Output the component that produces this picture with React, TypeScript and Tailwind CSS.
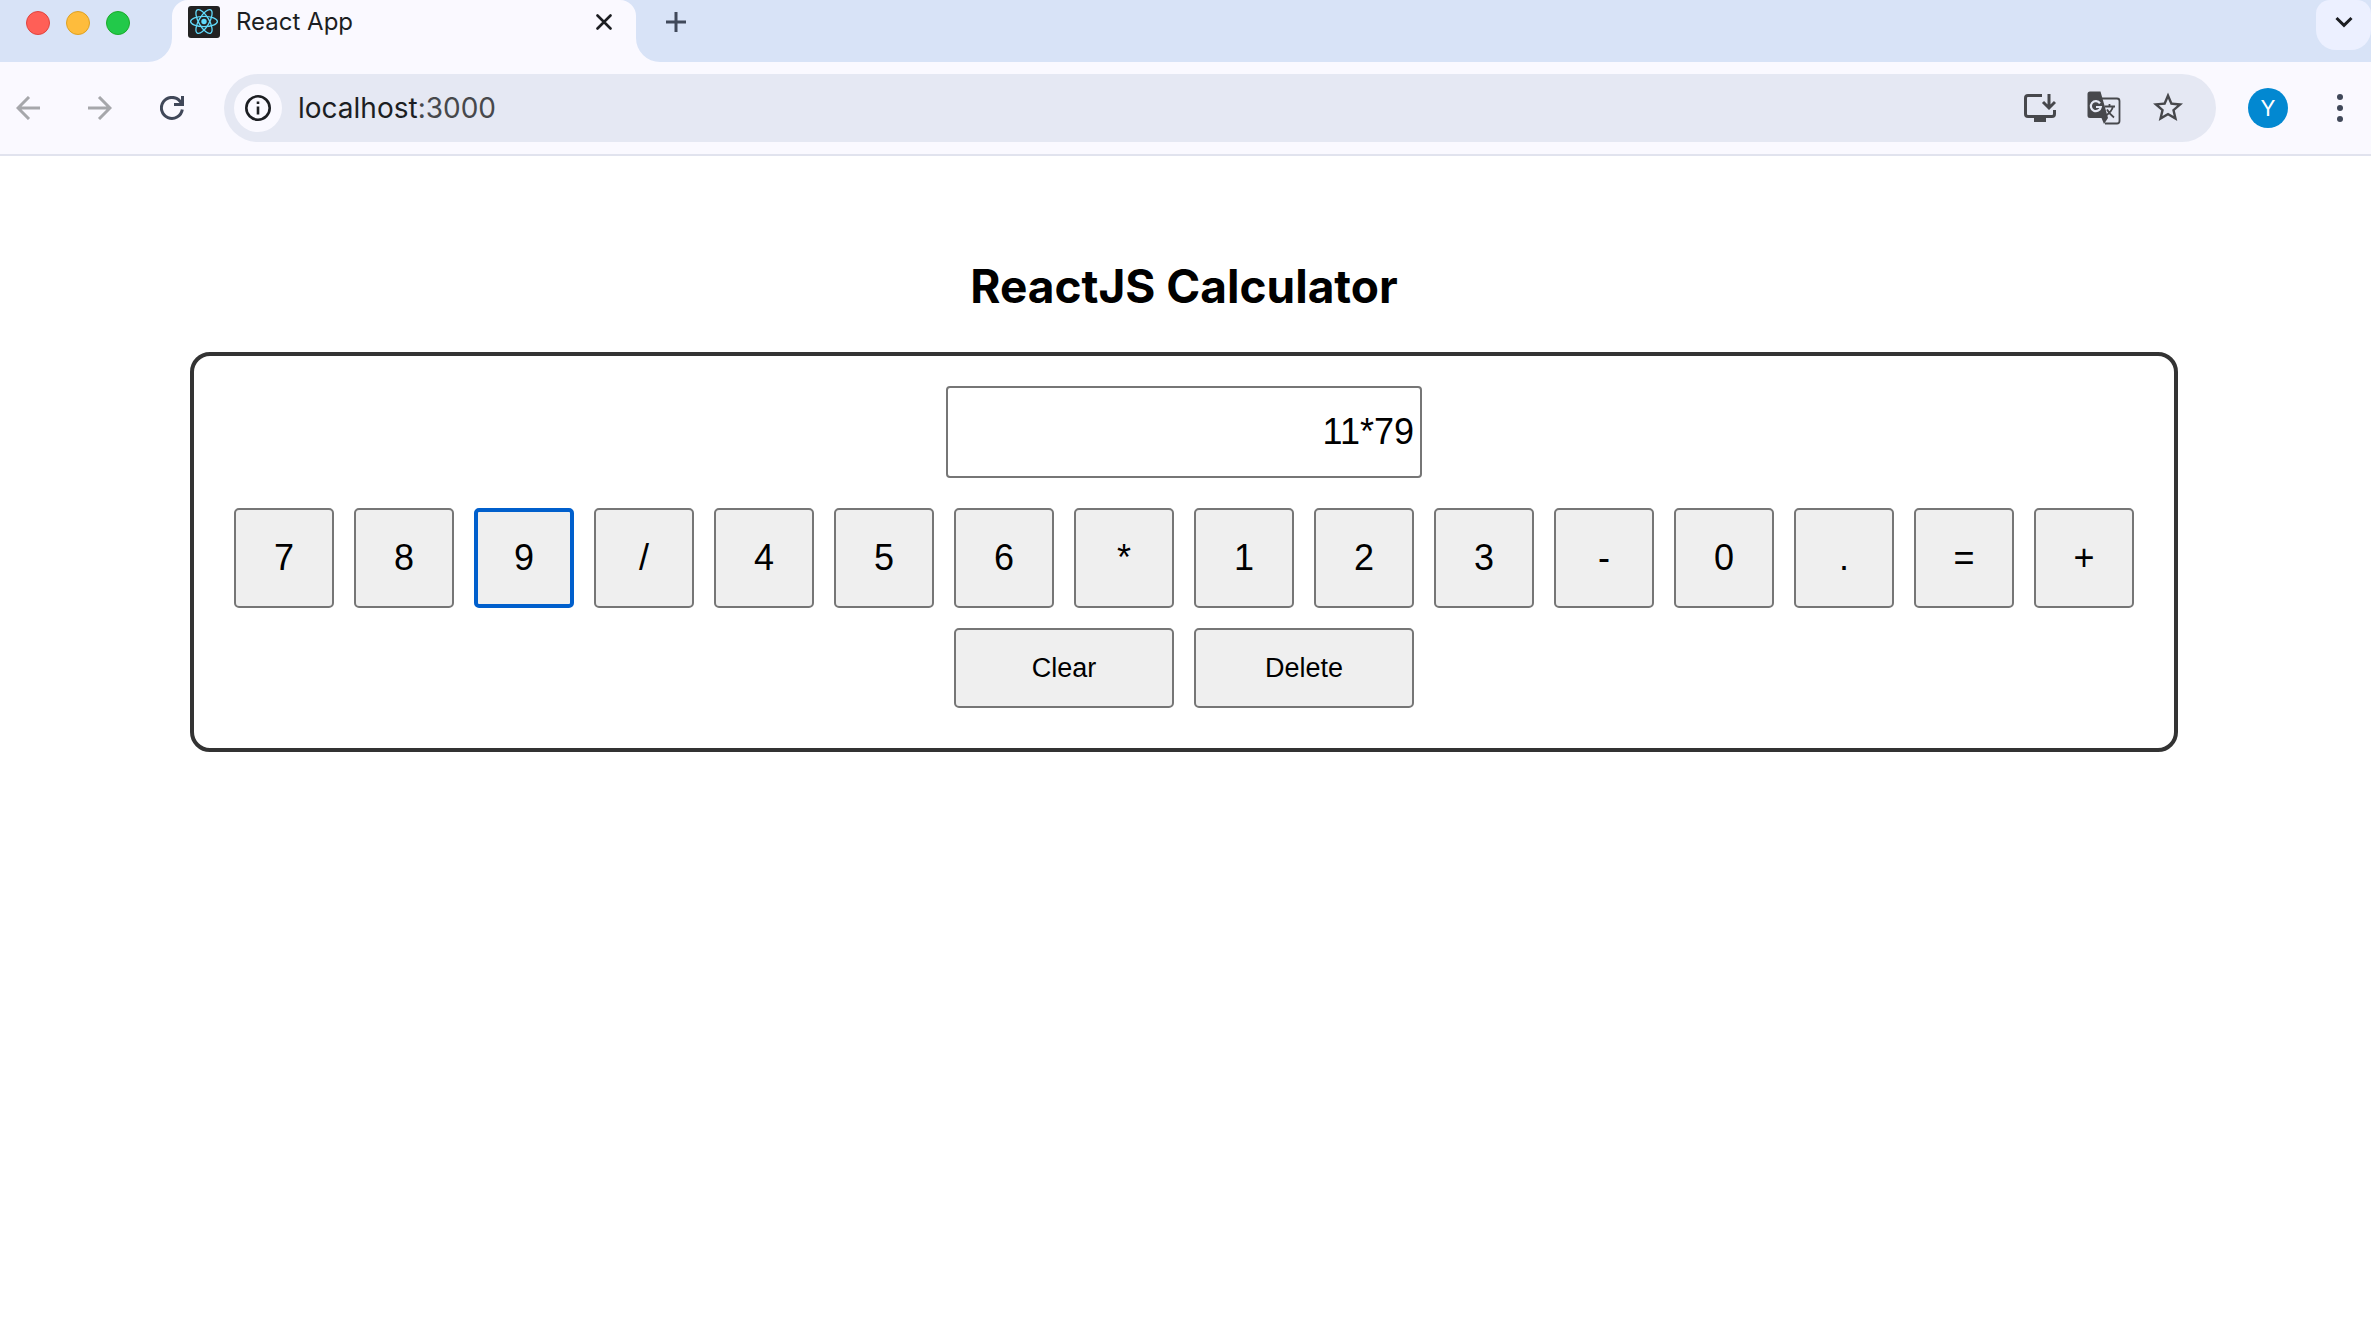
import { useState } from "react";

const KEYS = ["7", "8", "9", "/", "4", "5", "6", "*", "1", "2", "3", "-", "0", ".", "=", "+"];

function ReactIcon() {
  return (
    <svg viewBox="0 0 32 32" className="size-8 shrink-0" aria-hidden="true">
      <rect width="32" height="32" rx="3" fill="#222" />
      <g fill="none" stroke="#61dafb" strokeWidth="1.3">
        <ellipse cx="16" cy="15.5" rx="13.4" ry="5.2" />
        <ellipse cx="16" cy="15.5" rx="13.4" ry="5.2" transform="rotate(60 16 15.5)" />
        <ellipse cx="16" cy="15.5" rx="13.4" ry="5.2" transform="rotate(120 16 15.5)" />
      </g>
      <circle cx="16" cy="15.5" r="2.7" fill="#61dafb" />
    </svg>
  );
}

function TabStrip() {
  return (
    <div className="flex h-[62px] items-start bg-[#d8e3f7]">
      <div className="flex h-[46px] w-[172px] shrink-0 items-center gap-4 pl-[26px]">
        <span className="size-6 rounded-full border border-[#e0443e] bg-[#ff5f57]" />
        <span className="size-6 rounded-full border border-[#dea123] bg-[#febc3c]" />
        <span className="size-6 rounded-full border border-[#1aab29] bg-[#22c94a]" />
      </div>
      <div className="relative flex h-[62px] w-[464px] shrink-0 items-start rounded-t-[16px] bg-[#faf9ff]">
        <svg viewBox="0 0 24 24" className="absolute bottom-0 right-full size-6" aria-hidden="true">
          <path d="M24 0v24H0A24 24 0 0 0 24 0z" fill="#faf9ff" />
        </svg>
        <svg viewBox="0 0 24 24" className="absolute bottom-0 left-full size-6" aria-hidden="true">
          <path d="M0 0v24h24A24 24 0 0 1 0 0z" fill="#faf9ff" />
        </svg>
        <div className="flex h-11 flex-1 items-center pl-4 pr-6">
          <ReactIcon />
          <span className="ml-4 flex-1 text-[24px] leading-[44px] text-[#1c1e22]">React App</span>
          <button type="button" aria-label="Close tab">
            <svg viewBox="0 0 16 16" className="size-4" fill="none" stroke="#1c1e22" strokeWidth="2.6" strokeLinecap="round">
              <path d="M1.5 1.5l13 13M14.5 1.5l-13 13" />
            </svg>
          </button>
        </div>
      </div>
      <button type="button" aria-label="New tab" className="ml-[30px] flex h-11 items-center">
        <svg viewBox="0 0 20 20" className="size-5" fill="none" stroke="#40495a" strokeWidth="3">
          <path d="M10 0v20M0 10h20" />
        </svg>
      </button>
      <button
        type="button"
        aria-label="Search tabs"
        className="ml-auto flex h-[50px] w-[55px] justify-center rounded-b-[20px] rounded-t-[14px] bg-[#ecf0ff] pt-4"
      >
        <svg viewBox="0 0 18 12" className="h-3 w-[18px]" fill="none" stroke="#1c1e22" strokeWidth="3">
          <path d="M1.5 2L9 9.300l7.500-7.300" />
        </svg>
      </button>
    </div>
  );
}

function Toolbar() {
  return (
    <div className="flex h-[94px] items-center border-b-2 border-[#e1e3ee] bg-[#faf9ff]">
      <div className="flex w-[224px] shrink-0 items-center gap-12 pl-4">
        <button type="button" aria-label="Back">
          <svg viewBox="0 0 24 24" className="size-6" fill="none" stroke="#a6a7ab" strokeWidth="3">
            <path d="M24 12H2.500M13 1L2 12l11 11" />
          </svg>
        </button>
        <button type="button" aria-label="Forward">
          <svg viewBox="0 0 24 24" className="size-6" fill="none" stroke="#a6a7ab" strokeWidth="3">
            <path d="M0 12h21.500M11 1l11 11-11 11" />
          </svg>
        </button>
        <button type="button" aria-label="Reload">
          <svg viewBox="0 0 24 24" className="size-6" fill="none" stroke="#404859" strokeWidth="3">
            <path d="M22.300 13.500A10.500 10.500 0 1 1 20 5.200L22 7.500" />
            <path d="M22.500 0v8.500H14" />
          </svg>
        </button>
      </div>
      <div className="flex h-[68px] flex-1 items-center rounded-full bg-[#e5e8f3] pl-[10px] pr-8">
        <button
          type="button"
          aria-label="View site information"
          className="flex size-12 shrink-0 items-center justify-center rounded-full bg-[#faf9ff]"
        >
          <svg viewBox="0 0 26 26" className="size-[26px]" fill="none" stroke="#1c1e22" strokeWidth="2.6">
            <circle cx="13" cy="13" r="11.700" />
            <path d="M13 11.500v8M13 6.500v2.600" />
          </svg>
        </button>
        <span className="ml-4 flex-1 text-[28px] leading-[34px] text-[#1c1e22]">
          localhost<span className="text-[#47484c]">:3000</span>
        </span>
        <div className="flex items-center gap-[31px]">
          <button type="button" aria-label="Install app">
            <svg viewBox="0 0 32 32" className="size-8" aria-hidden="true">
              <path
                d="M18 3.500H4A2.500 2.500 0 0 0 1.500 6v16A2.500 2.500 0 0 0 4 24.500h24a2.500 2.500 0 0 0 2.500-2.500v-4M25 2v13M19 10l6 6 6-6"
                fill="none"
                stroke="#47484c"
                strokeWidth="3"
              />
              <path d="M10 25h12v5H10z" fill="#47484c" />
            </svg>
          </button>
          <button type="button" aria-label="Translate this page">
            <svg viewBox="0 0 34 34" className="size-[34px]" aria-hidden="true">
              <path d="M15 7.500h15a2.500 2.500 0 0 1 2.500 2.500v20a2.500 2.500 0 0 1-2.500 2.500H18" fill="none" stroke="#47484c" strokeWidth="1.800" />
              <path d="M3 .5h10.500L21 27l-4 6-2.500-6H3A2.500 2.500 0 0 1 .5 24.500V3A2.500 2.500 0 0 1 3 .5z" fill="#47484c" />
              <path d="M13 12.300A5 5 0 1 0 13.800 16H9" fill="none" stroke="#e5e8f3" strokeWidth="2.200" />
              <path d="M17.500 15.500H28M22.500 13v2.500M26 15.500c-1 4-4 7-7 9M20 18.500c1.500 3 4 5.500 7 8" fill="none" stroke="#47484c" strokeWidth="1.800" />
            </svg>
          </button>
          <button type="button" aria-label="Bookmark this tab">
            <svg viewBox="1.33 1.6 21.33 21.33" className="size-8" fill="#47484c">
              <path d="M22 9.24l-7.19-.62L12 2 9.190 8.630 2 9.240l5.460 4.730L5.820 21 12 17.270 18.180 21l-1.630-7.030L22 9.240zM12 15.400l-3.760 2.270 1-4.280-3.320-2.880 4.380-.38L12 6.100l1.710 4.040 4.380.38-3.320 2.880 1 4.280L12 15.400z" />
            </svg>
          </button>
        </div>
      </div>
      <button
        type="button"
        aria-label="Profile"
        className="ml-8 flex size-10 shrink-0 items-center justify-center rounded-full bg-[#0288d1] text-[22px] text-white"
      >
        Y
      </button>
      <button type="button" aria-label="Browser menu" className="ml-[49px] mr-7">
        <svg viewBox="0 0 6 28" className="h-7 w-[6px]" fill="#404859">
          <circle cx="3" cy="3" r="3" />
          <circle cx="3" cy="14" r="3" />
          <circle cx="3" cy="25" r="3" />
        </svg>
      </button>
    </div>
  );
}

function Calculator() {
  const [value, setValue] = useState("11*79");
  const [active, setActive] = useState("9");

  const press = (key: string) => {
    setActive(key);
    if (key !== "=") setValue((v) => v + key);
  };

  return (
    <main className="flex flex-col items-center pl-4 pr-[19px] pt-[100px]">
      <h1 className="text-[46px] font-bold leading-[60px] text-black">ReactJS Calculator</h1>
      <section className="mt-9 flex max-w-[1988px] flex-col items-center rounded-[20px] border-4 border-[#333] px-10 pb-10 pt-[30px] font-['Liberation_Sans',Arial,sans-serif]">
        <input
          type="text"
          aria-label="Expression"
          value={value}
          readOnly
          className="h-[92px] w-[476px] max-w-full rounded-[4px] border-2 border-[#767676] bg-white px-1.5 text-right text-[36px] text-black outline-none"
        />
        <div className="mt-[30px] flex flex-wrap justify-center gap-5">
          {KEYS.map((key) => (
            <button
              key={key}
              type="button"
              onClick={() => press(key)}
              className={
                "size-[100px] rounded-[5px] bg-[#efefef] text-[36px] leading-[40px] text-black outline-none " +
                (key === active ? "border-4 border-[#005fcc]" : "border-2 border-[#767676]")
              }
            >
              {key}
            </button>
          ))}
        </div>
        <div className="mt-5 flex flex-wrap justify-center gap-5">
          <button
            type="button"
            onClick={() => setValue("")}
            className="h-20 w-[220px] rounded-[5px] border-2 border-[#767676] bg-[#efefef] text-[27px] text-black"
          >
            Clear
          </button>
          <button
            type="button"
            onClick={() => setValue((v) => v.slice(0, -1))}
            className="h-20 w-[220px] rounded-[5px] border-2 border-[#767676] bg-[#efefef] text-[27px] text-black"
          >
            Delete
          </button>
        </div>
      </section>
    </main>
  );
}

export default function App() {
  return (
    <div className="min-h-screen bg-white font-['Inter',sans-serif]">
      <header>
        <TabStrip />
        <Toolbar />
      </header>
      <Calculator />
    </div>
  );
}
